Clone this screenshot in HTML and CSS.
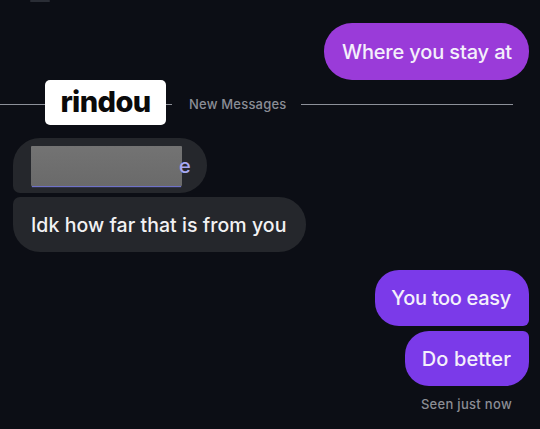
FILE: index.html
```html
<!DOCTYPE html>
<html>
<head>
<meta charset="utf-8">
<link rel="stylesheet" href="styles.css">
</head>
<body>
<div class="chat">
  <div class="handle"></div>
  <div class="row right first">
    <div class="bubble magenta">Where you stay at</div>
  </div>
  <div class="divider">
    <div class="line l1"></div>
    <div class="sticker">rindou</div>
    <div class="line l2"></div>
    <div class="label">New Messages</div>
    <div class="line l3"></div>
  </div>
  <div class="group left">
    <div class="bubble gray g1"><div class="censor"></div><span class="link">e</span></div>
    <div class="bubble gray g2">Idk how far that is from you</div>
  </div>
  <div class="group right mine">
    <div class="bubble violet v1">You too easy</div>
    <div class="bubble violet v2">Do better</div>
  </div>
  <div class="seen">Seen just now</div>
</div>
</body>
</html>
```
FILE: styles.css
```css
* { box-sizing: border-box; }
html, body { margin: 0; padding: 0; }
body {
  background: #0c0e15;
  width: 540px;
  height: 429px;
  overflow: hidden;
  font-family: Inter, "Noto Sans", sans-serif;
  -webkit-font-smoothing: antialiased;
}
.chat {
  display: flex;
  flex-direction: column;
}
.handle {
  width: 20px;
  height: 2px;
  margin-left: 30px;
  background: #2a2d35;
  border-radius: 1px;
}
.row, .group { display: flex; flex-direction: column; }
.right { align-items: flex-end; padding-right: 11px; }
.left { align-items: flex-start; padding-left: 13px; }
.first { margin-top: 21px; }
.bubble {
  display: flex;
  align-items: center;
  white-space: nowrap;
  color: #f4f0fb;
  font-size: 20px;
  font-weight: 500;
  letter-spacing: -0.15px;
}
.magenta {
  background: #9a3bd9;
  height: 57px;
  padding: 0 17px 0 18px;
  border-radius: 28px;
}
.divider {
  display: flex;
  align-items: center;
  height: 45px;
}
.line { height: 1px; background: #8d9099; margin-top: 3px; }
.l1 { width: 45px; }
.l2 { width: 6px; }
.l3 { width: 212px; }
.sticker {
  width: 121px;
  height: 45px;
  background: #ffffff;
  border-radius: 5px;
  color: #0a0a0a;
  font-size: 29px;
  font-weight: 800;
  display: flex;
  align-items: center;
  justify-content: center;
  letter-spacing: -0.6px;
  padding-bottom: 2px;
}
.label {
  margin: 3px 15px 0 17px;
  color: #8a8d96;
  font-size: 13px;
  font-weight: 500;
  letter-spacing: 0.2px;
}
.group.left { margin-top: 13px; gap: 4px; }
.gray {
  background: #25272c;
  height: 55px;
  border-radius: 27px;
}
.g1 {
  width: 194px;
  padding-left: 18px;
  border-bottom-left-radius: 7px;
}
.g2 {
  width: 293px;
  padding-left: 18px;
  border-top-left-radius: 7px;
  font-size: 19.5px;
  letter-spacing: 0.05px;
  color: #f2f2f4;
}
.censor {
  width: 151px;
  height: 40px;
  background: linear-gradient(180deg, #737373, #6a6a6a);
  box-shadow: 0 2px 1px -1px #6f72c8;
  border-radius: 1px;
}
.link {
  color: #a7a9f2;
  font-size: 20px;
  margin-left: -3px;
}
.group.mine { margin-top: 18px; gap: 5px; }
.violet {
  background: #7b3ae9;
  height: 56px;
  padding: 0 18px;
  border-radius: 24px;
  letter-spacing: -0.3px;
}
.v1 { border-bottom-right-radius: 6px; padding-left: 16px; }
.v2 { height: 55px; padding-left: 17px; border-top-right-radius: 6px; letter-spacing: 0.1px; }
.seen {
  align-self: flex-end;
  margin: 10px 28px 0 0;
  color: #8b8d94;
  font-size: 13px;
  font-weight: 500;
  letter-spacing: 0.3px;
}
```
